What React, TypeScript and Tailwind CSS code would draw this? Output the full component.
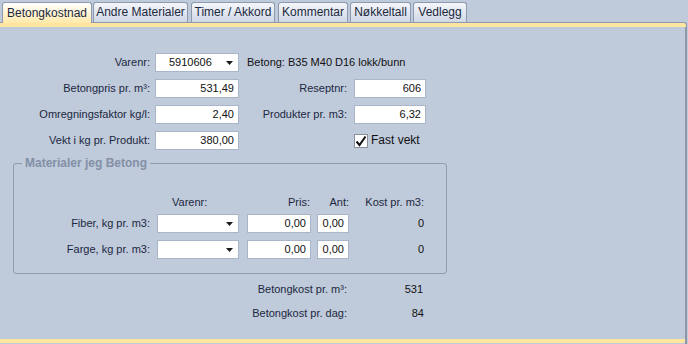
import React from "react";

const font = { fontFamily: '"Liberation Sans", Arial, sans-serif' };

function Arrow() {
  return (
    <svg width="7" height="4" viewBox="0 0 7 4" className="shrink-0">
      <path d="M0 0 H7 L3.5 4 Z" fill="#1a1a1a" />
    </svg>
  );
}

function Field({ value, w }: { value: string; w: string }) {
  return (
    <div
      className={`${w} h-[19px] bg-white border border-[#a9b6ca] flex items-center justify-end pr-[4px] text-[#111]`}
    >
      {value}
    </div>
  );
}

function Combo({ value, w }: { value?: string; w: string }) {
  return (
    <div
      className={`${w} h-[19px] bg-white border border-[#a9b6ca] flex items-center pl-[13px] pr-[5px] text-[#111]`}
    >
      <span className="flex-1">{value}</span>
      <Arrow />
    </div>
  );
}

const tabs = [
  { label: "Andre Materialer", w: "w-[95px]", ml: "ml-[1px]" },
  { label: "Timer / Akkord", w: "w-[84px]", ml: "ml-[3px]" },
  { label: "Kommentar", w: "w-[70px]", ml: "ml-[3px]" },
  { label: "Nøkkeltall", w: "w-[61px]", ml: "ml-[2px]" },
  { label: "Vedlegg", w: "w-[54px]", ml: "ml-[2px]" },
];

export default function App() {
  return (
    <div
      className="w-[688px] h-[344px] bg-[#bfcadb] flex flex-col text-[11px] leading-[13px] text-[#1c2840] overflow-hidden"
      style={font}
    >
      {/* tabs */}
      <div className="flex items-end h-[22px] pt-[2px] pl-[2px]">
        <div className="w-[90px] h-[21px] rounded-t-[3px] border border-b-0 border-[#8d9ab0] bg-gradient-to-b from-white to-[#ffe8a8] flex items-center justify-center text-[12px] relative z-10 -mb-[1px]">
          Betongkostnad
        </div>
        {tabs.map((t) => (
          <div
            key={t.label}
            className={`${t.w} ${t.ml} h-[20px] rounded-t-[3px] border border-b-0 border-[#8d9ab0] bg-gradient-to-b from-[#f4f6fa] to-[#d0d8e5] flex items-center justify-center text-[12px]`}
          >
            {t.label}
          </div>
        ))}
      </div>
      <div className="mr-[1px] h-[5px] border-t border-r border-[#8d9ab0] rounded-tr-[3px] bg-[#ffe6a0]" />

      {/* panel */}
      <div className="flex-1 mr-[1px] border-r-2 border-[#8d97a8] flex flex-col">
        <div className="flex flex-col gap-[7px] pt-[26px]">
          <div className="flex items-center h-[19px]">
            <div className="w-[150px] text-right">Varenr:</div>
            <div className="ml-[5px]">
              <Combo value="5910606" w="w-[84px]" />
            </div>
            <div className="ml-[8px] text-[#111]">Betong: B35 M40 D16 lokk/bunn</div>
          </div>
          <div className="flex items-center h-[19px]">
            <div className="w-[150px] text-right">Betongpris pr. m³:</div>
            <div className="ml-[5px]">
              <Field value="531,49" w="w-[84px]" />
            </div>
            <div className="w-[108px] text-right">Reseptnr:</div>
            <div className="ml-[7px]">
              <Field value="606" w="w-[72px]" />
            </div>
          </div>
          <div className="flex items-center h-[19px]">
            <div className="w-[150px] text-right">Omregningsfaktor kg/l:</div>
            <div className="ml-[5px]">
              <Field value="2,40" w="w-[84px]" />
            </div>
            <div className="w-[108px] text-right">Produkter pr. m3:</div>
            <div className="ml-[7px]">
              <Field value="6,32" w="w-[72px]" />
            </div>
          </div>
          <div className="flex items-center h-[19px]">
            <div className="w-[150px] text-right">Vekt i kg pr. Produkt:</div>
            <div className="ml-[5px]">
              <Field value="380,00" w="w-[84px]" />
            </div>
            <div className="ml-[115px] flex items-center">
              <div className="w-[14px] h-[14px] bg-white border border-[#8a8f99] flex items-center justify-center">
                <svg width="12" height="12" viewBox="0 0 12 12">
                  <path d="M1.5 6.5 L4.5 10 L10.5 1.5" stroke="#111" strokeWidth="2" fill="none" />
                </svg>
              </div>
              <span className="ml-[3px] text-[12px] text-[#111]">Fast vekt</span>
            </div>
          </div>
        </div>

        {/* group box */}
        <div className="ml-[13px] mt-[13px] w-[434px] h-[111px] border border-[#8e9bb0] rounded-[3px] relative">
          <span className="absolute -top-[8px] left-[8px] px-[3px] bg-[#bfcadb] font-bold text-[12px] leading-[14px] text-[#8390a6]">
            Materialer jeg Betong
          </span>
          <div className="flex items-center h-[13px] mt-[32px]">
            <div className="w-[136px]" />
            <div className="ml-[7px] w-[82px] pl-[15px]">Varenr:</div>
            <div className="ml-[8px] w-[64px] text-right pr-[1px]">Pris:</div>
            <div className="ml-[6px] w-[32px] text-right">Ant:</div>
            <div className="w-[75px] text-right">Kost pr. m3:</div>
          </div>
          {["Fiber, kg pr. m3:", "Farge, kg pr. m3:"].map((l, i) => (
            <div key={l} className={`flex items-center h-[19px] ${i === 0 ? "mt-[5px]" : "mt-[7px]"}`}>
              <div className="w-[136px] text-right">{l}</div>
              <div className="ml-[7px]">
                <Combo w="w-[82px]" />
              </div>
              <div className="ml-[8px]">
                <Field value="0,00" w="w-[64px]" />
              </div>
              <div className="ml-[6px]">
                <Field value="0,00" w="w-[32px]" />
              </div>
              <div className="w-[75px] text-right text-[#111]">0</div>
            </div>
          ))}
        </div>

        {/* totals */}
        <div className="flex h-[13px] mt-[9px]">
          <div className="w-[347px] text-right">Betongkost pr. m³:</div>
          <div className="w-[76px] text-right text-[#111]">531</div>
        </div>
        <div className="flex h-[13px] mt-[11px]">
          <div className="w-[347px] text-right">Betongkost pr. dag:</div>
          <div className="w-[77px] text-right text-[#111]">84</div>
        </div>
        <div className="flex-1" />
        <div className="h-[4px] bg-[#ffe6a0] mb-[1px] rounded-br-[2px]" />
      </div>
    </div>
  );
}
